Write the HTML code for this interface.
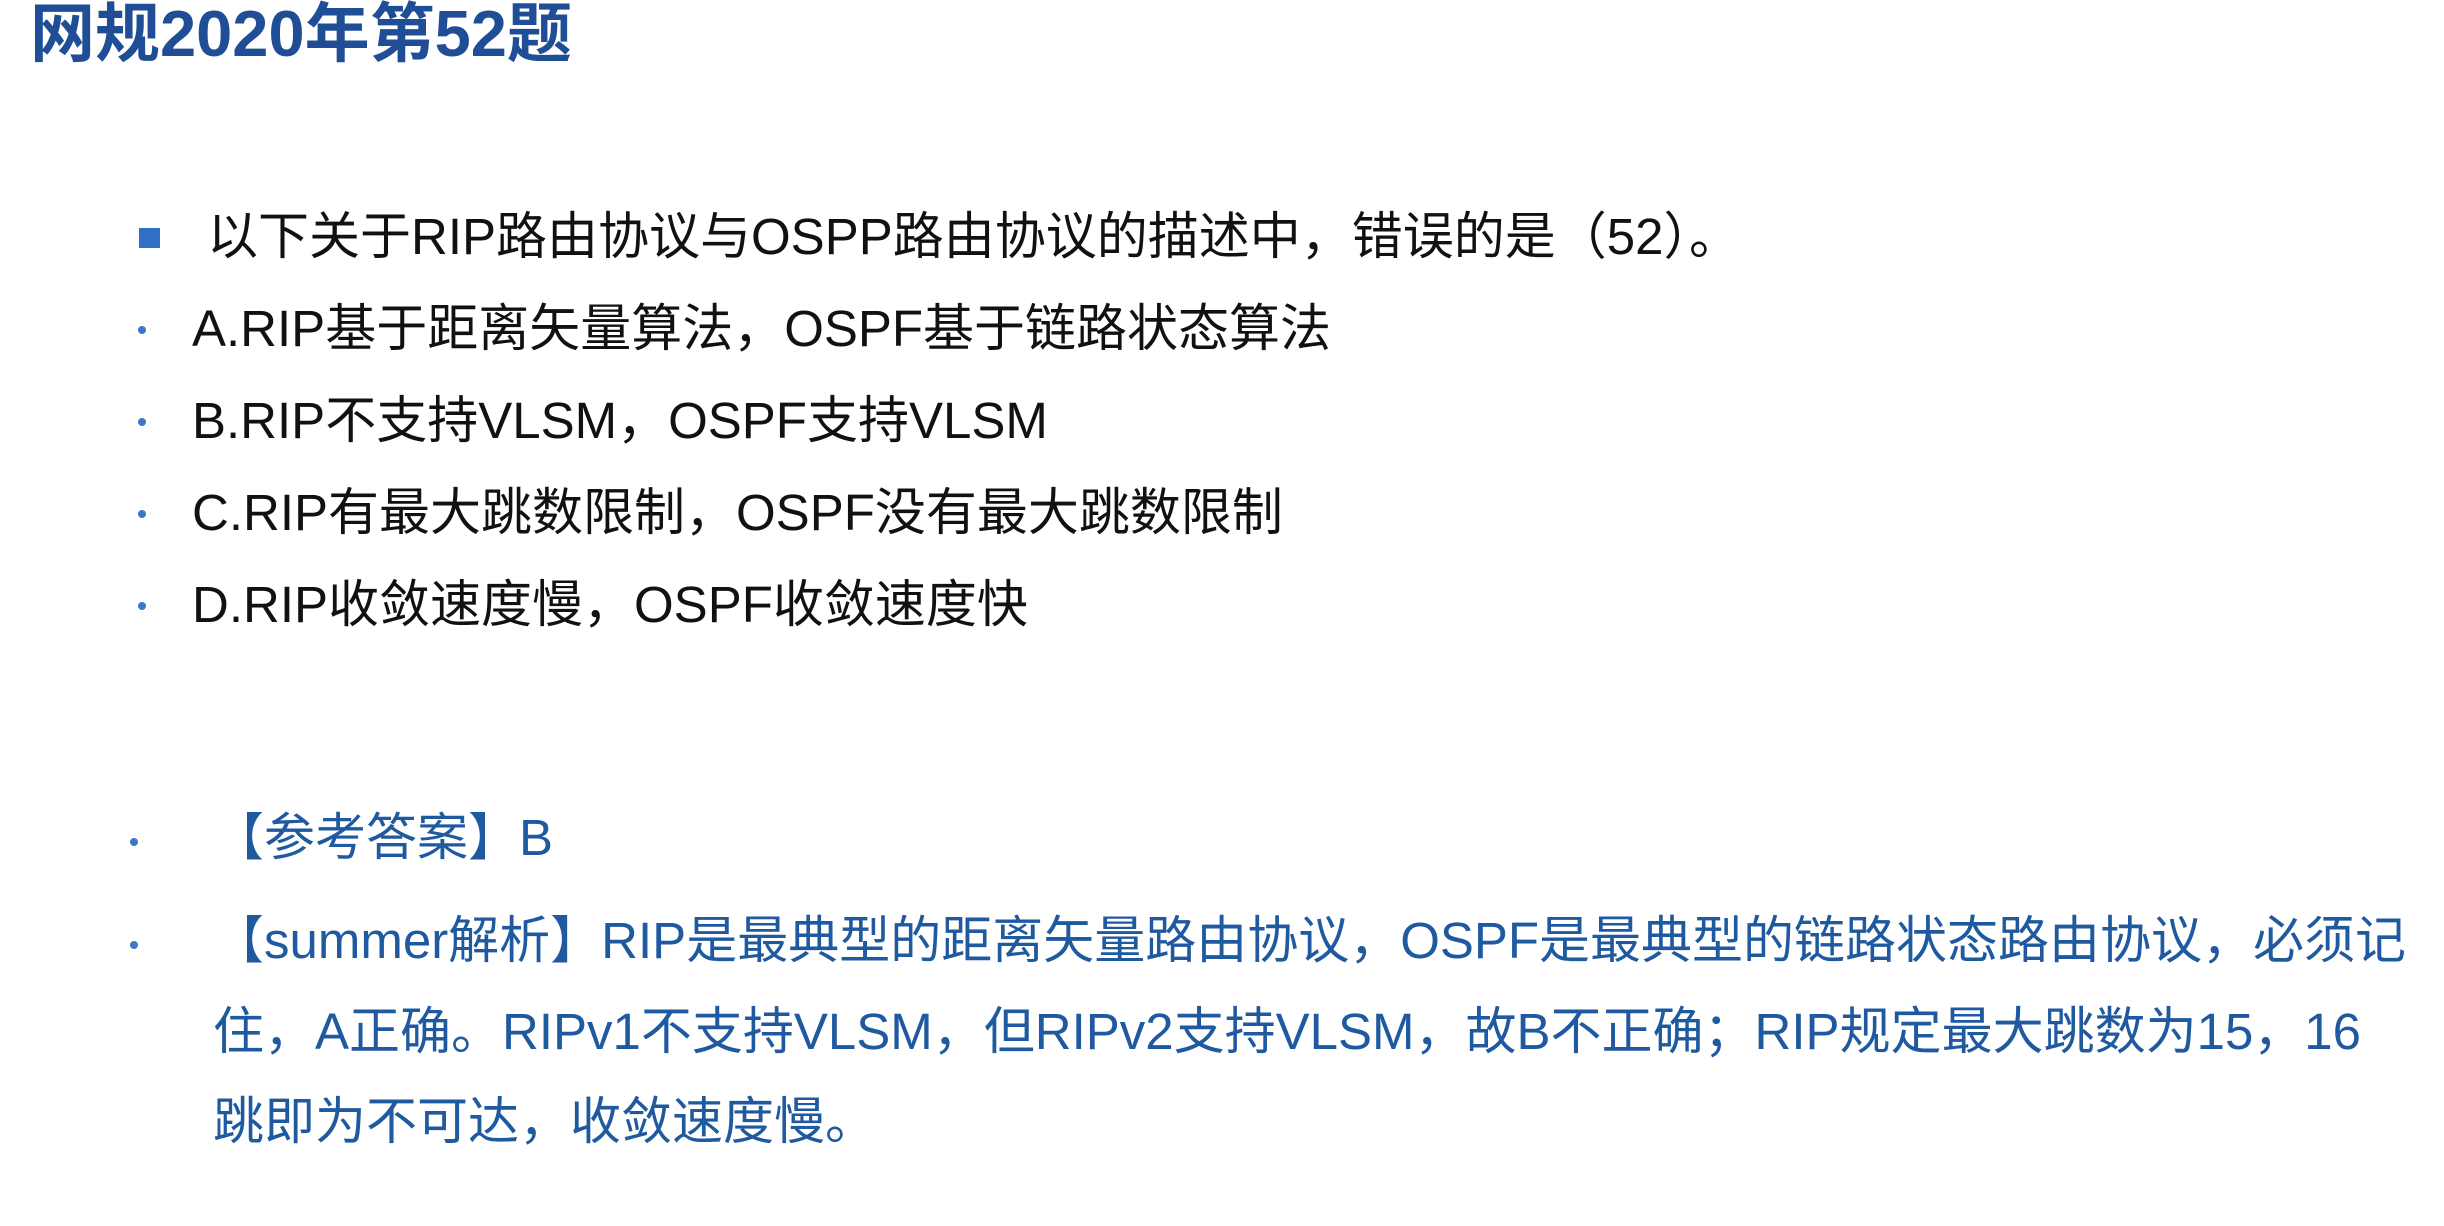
<!DOCTYPE html>
<html><head><meta charset="utf-8"><style>
html,body{margin:0;padding:0;background:#fff;}
body{width:2444px;height:1226px;position:relative;overflow:hidden;font-family:"Liberation Sans","Noto Sans CJK SC",sans-serif;}
.t{position:absolute;white-space:nowrap;font-size:51px;line-height:60px;color:#111;}
.b{color:#1f5aa0;}
.dot{position:absolute;width:8px;height:8px;border-radius:50%;background:#3a78c8;}
.sq{position:absolute;left:139px;top:228px;width:21px;height:20px;background:#2f6fc6;}
h1{position:absolute;left:30px;top:-4px;margin:0;font-size:65px;line-height:76px;font-weight:bold;color:#1f4e96;font-family:"Liberation Sans","Noto Sans CJK SC",sans-serif;white-space:nowrap;letter-spacing:0px;}
</style></head><body>
<h1>网规2020年第52题</h1>
<div class="sq"></div>
<div class="t" style="left:207px;top:207px">以下关于RIP路由协议与OSPP路由协议的描述中，错误的是（52）。</div>
<div class="dot" style="left:138px;top:326px"></div>
<div class="t" style="left:192px;top:299px">A.RIP基于距离矢量算法，OSPF基于链路状态算法</div>
<div class="dot" style="left:138px;top:418px"></div>
<div class="t" style="left:192px;top:391px">B.RIP不支持VLSM，OSPF支持VLSM</div>
<div class="dot" style="left:138px;top:510px"></div>
<div class="t" style="left:192px;top:483px">C.RIP有最大跳数限制，OSPF没有最大跳数限制</div>
<div class="dot" style="left:138px;top:602px"></div>
<div class="t" style="left:192px;top:575px">D.RIP收敛速度慢，OSPF收敛速度快</div>
<div class="dot" style="left:130px;top:838px"></div>
<div class="t b" style="left:213px;top:808px">【参考答案】B</div>
<div class="dot" style="left:130px;top:941px"></div>
<div class="t b" style="left:213px;top:911px">【summer解析】RIP是最典型的距离矢量路由协议，OSPF是最典型的链路状态路由协议，必须记</div>
<div class="t b" style="left:213px;top:1002px">住，A正确。RIPv1不支持VLSM，但RIPv2支持VLSM，故B不正确；RIP规定最大跳数为15，16</div>
<div class="t b" style="left:213px;top:1092px">跳即为不可达，收敛速度慢。</div>
</body></html>
